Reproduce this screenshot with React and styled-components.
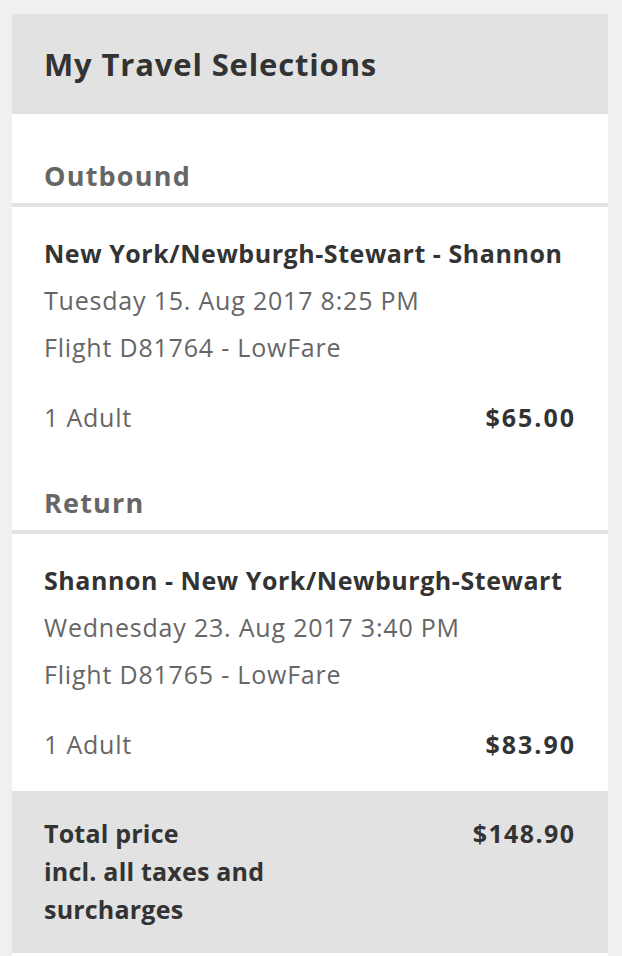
import React from "react";
import styled, { createGlobalStyle } from "styled-components";

const Global = createGlobalStyle`
  html, body { margin: 0; padding: 0; background: #f0f0f0; }
  body { font-family: "Open Sans", Lato, Arial, sans-serif; -webkit-font-smoothing: antialiased; }
`;

const Page = styled.div`
  padding: 14px 14px 0 12px;
`;

const Card = styled.section`
  width: 596px;
  background: #ffffff;
  padding-bottom: 10px;
`;

const Header = styled.header`
  height: 100px;
  background: #e2e2e2;
  display: flex;
  align-items: center;
  padding: 0 32px;
  box-sizing: border-box;
`;

const Title = styled.h1`
  margin: 0;
  font-size: 31px;
  font-weight: 700;
  letter-spacing: 0.85px;
  color: #333333;
`;

const SectionHead = styled.h2`
  margin: 0;
  padding: ${(p) => (p.$first ? "44px" : "21px")} 32px 9px;
  font-size: 27px;
  line-height: 36px;
  font-weight: 700;
  letter-spacing: 1.2px;
  color: #666666;
  border-bottom: 4px solid #e2e2e2;
`;

const Item = styled.div`
  padding: 23px 34px 23px 32px;
`;

const Route = styled.div`
  font-size: 25px;
  line-height: 47px;
  font-weight: 700;
  letter-spacing: 0.55px;
  color: #333333;
`;

const Detail = styled.div`
  font-size: 25px;
  line-height: 47px;
  letter-spacing: 0.8px;
  color: #666666;
`;

const PriceRow = styled.div`
  display: flex;
  justify-content: space-between;
  margin-top: 23px;
  font-size: 25px;
  line-height: 47px;
`;

const Pax = styled.span`
  color: #666666;
  letter-spacing: 0.8px;
`;

const Price = styled.span`
  font-weight: 700;
  letter-spacing: 2px;
  margin-right: -2px;
  color: #333333;
`;

const Footer = styled.div`
  background: #e2e2e2;
  display: flex;
  justify-content: space-between;
  align-items: flex-start;
  padding: 23px 34px 25px 32px;
  font-size: 25px;
  line-height: 38px;
  font-weight: 700;
  letter-spacing: 0.2px;
  color: #333333;
`;

const TotalLabel = styled.div`
  max-width: 240px;
`;

const TotalPrice = styled.div`
  letter-spacing: 1.4px;
  margin-right: -1.4px;
`;

const trips = [
  {
    label: "Outbound",
    route: "New York/Newburgh-Stewart - Shannon",
    date: "Tuesday 15. Aug 2017 8:25 PM",
    flight: "Flight D81764 - LowFare",
    pax: "1 Adult",
    price: "$65.00",
  },
  {
    label: "Return",
    route: "Shannon - New York/Newburgh-Stewart",
    date: "Wednesday 23. Aug 2017 3:40 PM",
    flight: "Flight D81765 - LowFare",
    pax: "1 Adult",
    price: "$83.90",
  },
];

export default function App() {
  return (
    <Page>
      <Global />
      <Card>
        <Header>
          <Title>My Travel Selections</Title>
        </Header>
        {trips.map((t, i) => (
          <React.Fragment key={t.label}>
            <SectionHead $first={i === 0}>{t.label}</SectionHead>
            <Item>
              <Route>{t.route}</Route>
              <Detail>{t.date}</Detail>
              <Detail>{t.flight}</Detail>
              <PriceRow>
                <Pax>{t.pax}</Pax>
                <Price>{t.price}</Price>
              </PriceRow>
            </Item>
          </React.Fragment>
        ))}
        <Footer>
          <TotalLabel>
            <div>Total price</div>
            <div>incl. all taxes and surcharges</div>
          </TotalLabel>
          <TotalPrice>$148.90</TotalPrice>
        </Footer>
      </Card>
    </Page>
  );
}
